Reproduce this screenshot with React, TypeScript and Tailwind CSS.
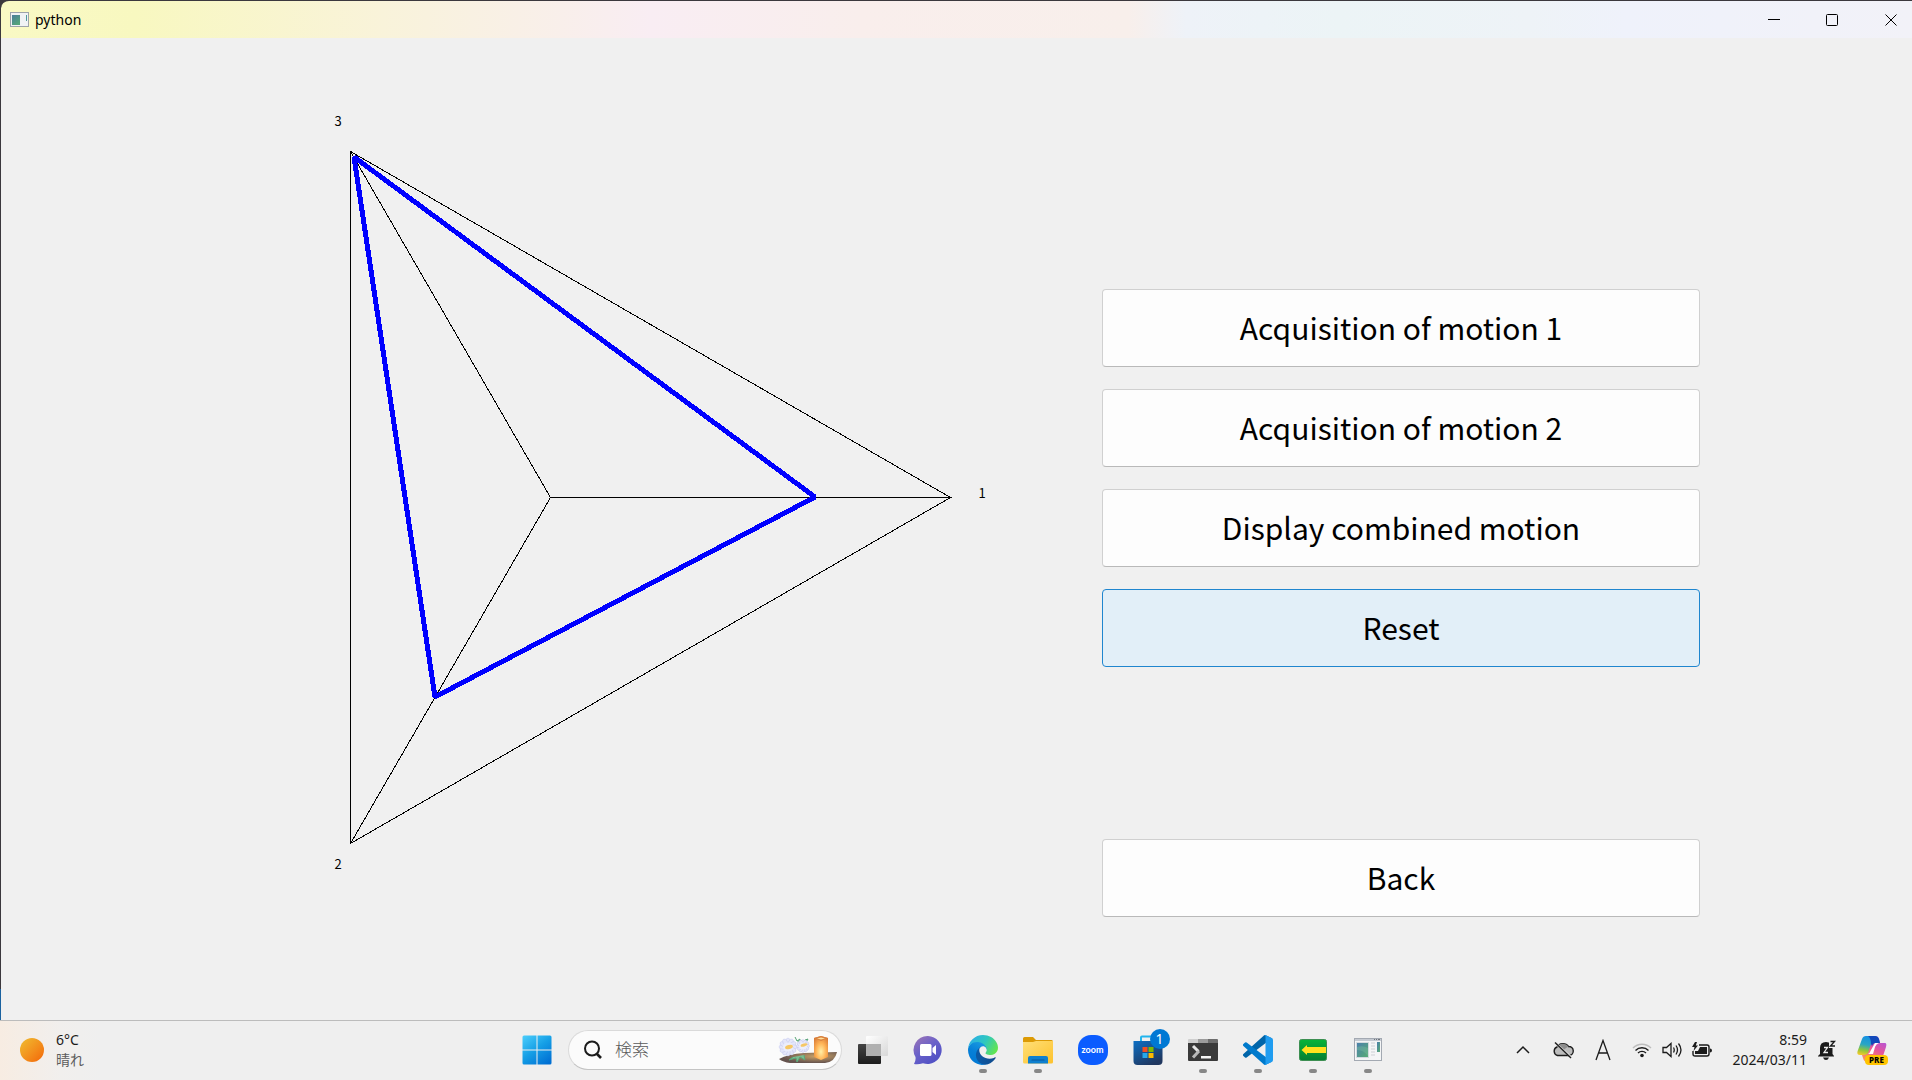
import { useState, type ReactNode } from "react";

const motions = ["Acquisition of motion 1", "Acquisition of motion 2", "Display combined motion", "Reset"];

const plainButton =
  "h-[78px] w-full rounded border border-[#d0d0d0] border-b-[#b9b9b9] bg-[#fdfdfd] pb-0.5 text-black";
const activeButton = "h-[78px] w-full rounded border border-[#1f86cf] bg-[#e2eff8] pb-0.5 text-black";

function PreviewIcon({ className }: { className: string }) {
  return (
    <svg viewBox="0 0 28 24" className={className} aria-hidden="true">
      <defs>
        <linearGradient id="pv" x1="0" y1="0" x2="1" y2="1">
          <stop offset="0" stopColor="#4b7fae" />
          <stop offset="1" stopColor="#58ad72" />
        </linearGradient>
      </defs>
      <rect x="0.5" y="0.5" width="27" height="22" fill="#f4f5f6" stroke="#a3a9b2" />
      <rect x="1" y="1" width="26" height="2" fill="#c5cad2" />
      <path d="M20 1h1v1h-1zM22 1h1v1h-1zM24 1h2v1h-2z" fill="#70757c" />
      <rect x="2.500" y="4.500" width="12" height="15" fill="url(#pv)" stroke="#d4dadf" />
      <path d="M3 12q7 0 11 6v-8q-5-3-11-1z" fill="#7fc4a0" opacity=".35" />
      <path d="M17 5h4M17 8h4M17 11h4M17 14h4M17 17h4" stroke="#cdd0d5" />
      <rect x="23" y="4" width="3" height="10" fill="url(#pv)" />
    </svg>
  );
}

function WindowIcon() {
  return (
    <svg viewBox="0 0 19 15" className="h-[15px] w-[19px]" aria-hidden="true">
      <defs>
        <linearGradient id="wi" x1="0" y1="0" x2=".6" y2="1">
          <stop offset="0" stopColor="#4a7c9c" />
          <stop offset="1" stopColor="#54a57a" />
        </linearGradient>
      </defs>
      <rect x=".5" y=".5" width="18" height="14" fill="#f0f2f5" stroke="#9da3ab" />
      <rect x="2" y="3" width="8" height="10" fill="url(#wi)" />
      <rect x="16" y="3" width="1" height="6" fill="#4f9a9c" />
    </svg>
  );
}

function RadarChart() {
  return (
    <svg viewBox="1 1 1101 900" className="block h-auto w-full" role="img" aria-label="Motion ratio chart">
      <g fill="none" stroke="#000" shapeRendering="crispEdges">
        <path d="M950.500 460.500L350.500 114.500V806.500Z" />
        <path d="M550.500 460.500H950.500M550.500 460.500L350.500 114.500M550.500 460.500L350.500 806.500" />
        <path d="M815 460L354 120L435 660Z" stroke="#00f" strokeWidth="5" strokeLinejoin="bevel" />
      </g>
      <g fontFamily="'Noto Sans CJK JP', sans-serif" fontSize="13" textAnchor="middle">
        <text x="982" y="461">1</text>
        <text x="338" y="832">2</text>
        <text x="338" y="89">3</text>
      </g>
    </svg>
  );
}

function StartIcon() {
  return (
    <svg viewBox="0 0 30 30" className="size-[30px]" aria-hidden="true">
      <defs>
        <linearGradient id="win" gradientUnits="userSpaceOnUse" x1="2" y1="0" x2="24" y2="30">
          <stop offset="0" stopColor="#4bcdfb" />
          <stop offset=".5" stopColor="#159fe6" />
          <stop offset="1" stopColor="#006fd3" />
        </linearGradient>
      </defs>
      <path fill="url(#win)" d="M2 0.500H14.500V14.500H.5V2Q.5.500 2 .5ZM15.500.5H28Q29.500.5 29.500 2V14.500H15.500ZM.5 15.500H14.500V29.500H2Q.5 29.500.5 28ZM15.500 15.500H29.500V28Q29.500 29.500 28 29.500H15.500Z" />
    </svg>
  );
}

function SearchArt() {
  const petals = [0, 30, 60, 90, 120, 150, 180, 210, 240, 270, 300, 330];
  return (
    <svg viewBox="0 0 60 30" className="h-[30px] w-[60px] shrink-0" aria-hidden="true">
      <defs>
        <radialGradient id="lamp" cx=".5" cy=".65" r=".7">
          <stop offset="0" stopColor="#fff0a8" />
          <stop offset=".5" stopColor="#ffb457" />
          <stop offset="1" stopColor="#d97a35" />
        </radialGradient>
        <radialGradient id="ground" cx=".65" cy=".4" r=".6">
          <stop offset="0" stopColor="#c9a268" />
          <stop offset="1" stopColor="#65534e" />
        </radialGradient>
      </defs>
      <path d="M1 24Q10 19 26 18L59 17Q57 27 47 28H12Q5 27 1 24Z" fill="url(#ground)" />
      <path d="M17 2l2 4 3-2-1 5M27 5l3-1-3 5M15 22l-4 3 7-2 1 4 3-5 5 3-1-5" fill="#7bbd91" stroke="#5ba679" />
      <ellipse cx="10" cy="12" rx="8" ry="7" fill="#d9dbf5" />
      <ellipse cx="25" cy="11" rx="6" ry="5" fill="#d9dbf5" />
      {petals.map((a) => (
        <g key={a} fill="#e4e6fa" stroke="#bdc1ea" strokeWidth=".4">
          <ellipse cx="10" cy="6.500" rx="2.200" ry="3.500" transform={`rotate(${a} 10 12)`} />
          <ellipse cx="25" cy="7" rx="1.800" ry="2.600" transform={`rotate(${a} 25 11)`} />
        </g>
      ))}
      <ellipse cx="10" cy="12" rx="5" ry="4.500" fill="#eceefc" />
      <ellipse cx="25" cy="11" rx="4" ry="3.500" fill="#eceefc" />
      <ellipse cx="11" cy="12" rx="4" ry="2" fill="#f5c766" transform="rotate(-15 11 12)" />
      <ellipse cx="26" cy="10" rx="3.500" ry="1.500" fill="#f5c766" transform="rotate(-15 26 10)" />
      <path d="M36 3L43 1 50 3V22L43 25 36 22Z" fill="url(#lamp)" />
      <path d="M36 3L43 1 50 3 43 6Z" fill="#d9823f" />
      <path d="M39 3.500l4-1 4 1-4 1z" fill="#ffdf9a" />
    </svg>
  );
}

function TaskViewIcon() {
  return (
    <svg viewBox="0 0 30 30" className="size-[30px]" aria-hidden="true">
      <defs>
        <linearGradient id="tvd" x1="0" y1="0" x2="0" y2="1">
          <stop offset="0" stopColor="#444" />
          <stop offset="1" stopColor="#1c1c1c" />
        </linearGradient>
        <linearGradient id="tvl" x1="0" y1="0" x2="1" y2="1">
          <stop offset="0" stopColor="#fff" />
          <stop offset="1" stopColor="#d8d8d8" />
        </linearGradient>
      </defs>
      <rect y="9" width="23" height="20" rx="1" fill="url(#tvd)" />
      <rect x="8" y="1" width="22" height="20" rx="1" fill="url(#tvl)" />
      <path d="M8 9H23V21H9Q8 21 8 20Z" fill="#b0b0b0" />
    </svg>
  );
}

function ChatIcon() {
  return (
    <svg viewBox="0 0 30 30" className="size-[30px]" aria-hidden="true">
      <defs>
        <linearGradient id="chat" x1="0" y1="0" x2=".7" y2="1">
          <stop offset="0" stopColor="#a076b4" />
          <stop offset=".5" stopColor="#6a61c9" />
          <stop offset="1" stopColor="#4f50c4" />
        </linearGradient>
      </defs>
      <path d="M15 1A14 14 0 1 1 10 28.200Q5 30 1 29Q3 26 2.500 22A14 14 0 0 1 15 1Z" fill="url(#chat)" />
      <rect x="7" y="9" width="11.500" height="12" rx="1.500" fill="#fff" />
      <path d="M19.500 13L23 10V20L19.500 17Z" fill="#fff" />
    </svg>
  );
}

function EdgeIcon() {
  return (
    <svg viewBox="0 0 256 256" className="size-[30px]" aria-hidden="true">
      <defs>
        <linearGradient id="e1" x1=".2" y1=".5" x2="1" y2=".5">
          <stop offset="0" stopColor="#0c59a4" />
          <stop offset="1" stopColor="#114a8b" />
        </linearGradient>
        <linearGradient id="e2" x1=".7" y1="0" x2=".3" y2="1">
          <stop offset="0" stopColor="#1b9de2" />
          <stop offset=".5" stopColor="#0680d8" />
          <stop offset="1" stopColor="#0078d4" />
        </linearGradient>
        <linearGradient id="e3" x1="0" y1=".3" x2="1" y2=".7">
          <stop offset="0" stopColor="#2baee8" />
          <stop offset=".5" stopColor="#2fc7bf" />
          <stop offset="1" stopColor="#64e64a" />
        </linearGradient>
      </defs>
      <path fill="url(#e1)" d="M231 190.500c-3.400 1.800-6.900 3.400-10.500 4.700a101.500 101.500 0 0 1-35.900 6.500c-47.300 0-88.500-32.500-88.500-74.300.1-11.400 6.400-21.900 16.400-27.300-42.800 1.800-53.800 46.400-53.800 72.500 0 73.900 68.100 81.400 82.800 81.400 7.900 0 19.800-2.300 27-4.600l1.300-.4a128.300 128.300 0 0 0 66.600-52.800 4 4 0 0 0-5.400-5.700z" />
      <path fill="url(#e2)" d="M105.700 241.400a79.200 79.200 0 0 1-22.700-21.300 80.700 80.700 0 0 1 29.500-120c3.200-1.500 8.500-4.100 15.600-4 10.100.1 19.600 4.900 25.700 13a31.900 31.900 0 0 1 6.300 18.700c0-.2 24.500-79.600-80-79.600-43.900 0-80 41.700-80 78.200a130.200 130.200 0 0 0 12.100 56 128 128 0 0 0 156.400 67 75.500 75.500 0 0 1-62.800-8z" />
      <path fill="url(#e3)" d="M152.300 148.900c-.9 1-3.400 2.500-3.400 5.600 0 2.600 1.700 5.200 4.800 7.300 14.300 10 41.400 8.600 41.500 8.600a59.600 59.600 0 0 0 30.300-8.300 61.400 61.400 0 0 0 30.400-52.900c.3-22.400-8-37.300-11.300-43.900C223.500 23.900 177.700 0 128 0A128 128 0 0 0 0 126.200c.5-36.500 36.800-66 80-66 3.500 0 23.500.3 42 10a72.600 72.600 0 0 1 30.900 29.300c6.100 10.600 7.200 24.100 7.200 29.500 0 5.400-2.700 13.300-7.800 19.900z" />
    </svg>
  );
}

function FolderIcon() {
  return (
    <svg viewBox="0 0 30 30" className="size-[30px]" aria-hidden="true">
      <defs>
        <linearGradient id="fold" x1="0" y1="0" x2="1" y2="1">
          <stop offset="0" stopColor="#ffdf78" />
          <stop offset="1" stopColor="#fdc22d" />
        </linearGradient>
      </defs>
      <path d="M0 3.500Q0 2 1.500 2H10L13 5H28.500Q30 5 30 6.500V10H0Z" fill="#dc9a05" />
      <path d="M0 7H10L13 6H30V27Q30 28.500 28.500 28.500H1.500Q0 28.500 0 27Z" fill="url(#fold)" />
      <path d="M5 28.500V23Q5 21 7 21H23Q25 21 25 23V28.500Z" fill="#0f80cf" />
      <path d="M9 25H21" stroke="#0a579b" strokeWidth="1.200" strokeLinecap="round" />
    </svg>
  );
}

function ZoomIcon() {
  return (
    <span className="flex size-[30px] items-center justify-center rounded-[13px] bg-[#0b5cff] font-['Lato','Noto_Sans',sans-serif] text-[9px] font-bold text-white">
      zoom
    </span>
  );
}

function StoreIcon() {
  return (
    <span className="relative">
      <svg viewBox="0 0 30 30" className="size-[30px]" aria-hidden="true">
        <defs>
          <linearGradient id="store" x1="0" y1="0" x2=".6" y2="1">
            <stop offset="0" stopColor="#0d6fc4" />
            <stop offset="1" stopColor="#20375f" />
          </linearGradient>
        </defs>
        <path d="M8 7V2.500Q8 1.500 9 1.500H21V7" fill="none" stroke="#22b5ee" strokeWidth="2" />
        <path d="M.5 6H29.500V26Q29.500 30 25.500 30H4.500Q.5 30 .5 26Z" fill="url(#store)" />
        <path d="M9.500 12H14.500V17H9.500Z" fill="#f25022" />
        <path d="M15.500 12H20.500V17H15.500Z" fill="#7fba00" />
        <path d="M9.500 18H14.500V23H9.500Z" fill="#28a8ea" />
        <path d="M15.500 18H20.500V23H15.500Z" fill="#ffb900" />
      </svg>
      <span className="absolute -top-[6px] -right-[7px] flex size-5 items-center justify-center rounded-full bg-[#0078d4] text-sm text-white">
        1
      </span>
    </span>
  );
}

function TerminalIcon() {
  return (
    <svg viewBox="0 0 30 30" className="size-[30px]" aria-hidden="true">
      <path d="M0 5Q0 4 1 4H10V9H0Z" fill="#cfcfcf" />
      <path d="M10 4H20V9H10Z" fill="#9b9b9b" />
      <path d="M20 4H29Q30 4 30 5V9H20Z" fill="#6d6d6d" />
      <path d="M0 8H30V25Q30 26 29 26H1Q0 26 0 25Z" fill="#3a3a3a" />
      <path d="M5 11L10.500 16.500" stroke="#e6e6e6" strokeWidth="3" />
      <path d="M11 16L5 22.500" stroke="#bababa" strokeWidth="3" />
      <path d="M13 21H23V23.500H13Z" fill="#f4f4f4" />
    </svg>
  );
}

function CodeIcon() {
  return (
    <svg viewBox="0 0 100 100" className="size-[30px]" aria-hidden="true">
      <path fill="#0065a9" d="M96.500 10.800L75.900.9a6.200 6.200 0 0 0-7.100 1.200L1.300 63.600a4.200 4.200 0 0 0 0 6.200l5.500 5a4.200 4.200 0 0 0 5.300.2L93.400 13.400c2.700-2.100 6.600-.1 6.600 3.300v-.3a6.300 6.300 0 0 0-3.500-5.600z" />
      <path fill="#007acc" d="M96.500 89.200l-20.600 9.900a6.200 6.200 0 0 1-7.100-1.200L1.300 36.400a4.200 4.200 0 0 1 0-6.200l5.500-5a4.200 4.200 0 0 1 5.300-.2l81.300 61.600c2.700 2.100 6.600.1 6.600-3.300v.3a6.300 6.300 0 0 1-3.500 5.600z" />
      <path fill="#1f9cf0" d="M75.900 99.100a6.200 6.200 0 0 1-7.100-1.200c2.300 2.300 6.200.7 6.200-2.600V4.700c0-3.300-3.900-4.900-6.200-2.600A6.200 6.200 0 0 1 75.900.9l20.600 9.900a6.300 6.300 0 0 1 3.500 5.600v67.200a6.300 6.300 0 0 1-3.500 5.600z" />
    </svg>
  );
}

function ArrowIcon() {
  return (
    <svg viewBox="0 0 30 30" className="size-[30px]" aria-hidden="true">
      <defs>
        <linearGradient id="grn" x1="0" y1="0" x2="0" y2="1">
          <stop offset="0" stopColor="#05b53a" />
          <stop offset="1" stopColor="#057d31" />
        </linearGradient>
      </defs>
      <rect x="1.500" y="4.500" width="27" height="21" rx="2" fill="url(#grn)" stroke="#3d8f52" />
      <path d="M3.500 15L9 10V12H28V18H9V20Z" fill="#ffe11f" />
    </svg>
  );
}

function CopilotIcon() {
  return (
    <span className="relative flex size-[30px]">
      <svg viewBox="0 0 30 30" className="size-[30px]" aria-hidden="true">
        <defs>
          <linearGradient id="cpa" x1=".5" y1="0" x2=".3" y2="1">
            <stop offset="0" stopColor="#1690e4" />
            <stop offset=".45" stopColor="#2aa6c4" />
            <stop offset=".75" stopColor="#8fc63d" />
            <stop offset="1" stopColor="#f2c928" />
          </linearGradient>
          <linearGradient id="cpb" x1=".8" y1="0" x2=".3" y2="1">
            <stop offset="0" stopColor="#a556ea" />
            <stop offset=".5" stopColor="#e5559d" />
            <stop offset="1" stopColor="#ff9459" />
          </linearGradient>
        </defs>
        <path d="M18 1Q21 1 22 4L23 8H28Q30 8 29 12L26 21Q24 27 20 27H10Q7 27 6 23L5 20Z" fill="url(#cpb)" />
        <path d="M9 1H19Q16 2 15 6L11 18Q10 20 7 20H3Q-1 20 1 15L5 4Q6 1 9 1Z" fill="url(#cpa)" />
        <path d="M11 1H18Q21 1 22 4L23 8H19Q16 8 15 11L14 9Q14 3 11 1Z" fill="#1249ba" />
        <path d="M18 8H22Q19 9 18 12L16 19H11Q13 18 14 15Z" fill="#fff" />
      </svg>
      <span className="absolute -right-px bottom-0 flex h-[10px] w-[23px] items-center justify-center rounded-sm bg-[#ffc400] text-[8px] font-extrabold text-black">
        PRE
      </span>
    </span>
  );
}

function AppButton({ label, running, children }: { label: string; running?: boolean; children: ReactNode }) {
  return (
    <button type="button" aria-label={label} className="relative flex h-full w-[55px] items-center justify-center">
      {children}
      {running && <span className="absolute bottom-[6px] left-6 h-1 w-2 rounded-full bg-[#878787]" />}
    </button>
  );
}

function TitleBar() {
  return (
    <header className="flex h-[38px] items-center justify-between rounded-tl-lg border-t border-[#3b383d] bg-[linear-gradient(90deg,#f9f9c4_0%,#f8f8c0_7%,#f9f3da_20%,#f9edf3_34%,#f9eeec_45%,#f8efeb_59%,#eef2f8_62%,#ecf4f6_70%,#eef3f7_80%,#eff2fb_85%,#f2f2f8_100%)] pl-[9px]">
      <div className="flex items-center gap-[6px]">
        <WindowIcon />
        <h1 className="text-sm text-black">python</h1>
      </div>
      <div className="flex h-full">
        <button type="button" aria-label="Minimize" className="flex w-[58px] items-center justify-center">
          <svg viewBox="0 0 12 12" className="size-3"><path d="M0 5.500H12" stroke="#000" /></svg>
        </button>
        <button type="button" aria-label="Maximize" className="flex w-[58px] items-center justify-center">
          <svg viewBox="0 0 12 12" className="size-3"><rect x=".5" y=".5" width="11" height="11" rx="1" fill="none" stroke="#000" /></svg>
        </button>
        <button type="button" aria-label="Close" className="flex w-[51px] items-center justify-center pl-2">
          <svg viewBox="0 0 12 12" className="size-3"><path d="M.5.5L11.500 11.500M11.500.5L.5 11.500" stroke="#000" /></svg>
        </button>
      </div>
    </header>
  );
}

function Tray() {
  return (
    <div className="flex items-center justify-end pr-[25px] pb-0.5 text-[#1b1b1b]">
      <button type="button" aria-label="Show hidden icons" className="mr-[22px]">
        <svg viewBox="0 0 14 10" className="h-[10px] w-[14px]"><path d="M1 8L7 2L13 8" fill="none" stroke="currentColor" strokeWidth="1.500" /></svg>
      </button>
      <button type="button" aria-label="OneDrive" className="mr-[21px]">
        <svg viewBox="0 0 22 18" className="h-[18px] w-[22px]">
          <path d="M5.500 14.500A4.500 4.500 0 0 1 5 6A6.500 5.500 0 0 1 16.500 5.500A4.500 4.500 0 0 1 17 14.500Z" fill="#bcbcbc" stroke="currentColor" strokeWidth="1.400" />
          <path d="M5 6A6.500 5.500 0 0 1 16.500 5.500Q13 7 11 10Q9 6 5 6Z" fill="#8d8d8d" />
          <path d="M3.500 2L19 16" stroke="#e4e4e4" strokeWidth="2" />
          <path d="M3 1.500L19 17" stroke="currentColor" strokeWidth="1.400" />
        </svg>
      </button>
      <button type="button" aria-label="Input mode" className="mr-[21px]">
        <svg viewBox="0 0 16 22" className="h-[22px] w-4"><path d="M1 21L8 1.500L15 21M3.500 14H12.500" fill="none" stroke="currentColor" strokeWidth="1.300" /></svg>
      </button>
      <button type="button" aria-label="Network, sound and battery" className="mr-[21px] flex items-center gap-[10px]">
        <svg viewBox="0 0 20 16" className="h-4 w-5" fill="none" strokeWidth="1.400">
          <path d="M1 6A12.700 12.700 0 0 1 19 6" stroke="#bdbdbd" />
          <path d="M3.500 8.500A9.200 9.200 0 0 1 16.500 8.500M6 11A5.700 5.700 0 0 1 14 11" stroke="currentColor" />
          <circle cx="10" cy="13.500" r="1.800" fill="currentColor" />
        </svg>
        <svg viewBox="0 0 20 16" className="h-4 w-5" fill="none" stroke="currentColor" strokeWidth="1.300">
          <path d="M1 5.500H4.500L9 1.500V14.500L4.500 10.500H1ZM11.500 5.500Q13 8 11.500 10.500M14 3.500Q17 8 14 12.500M16.500 1.500Q21.500 8 16.500 14.500" />
        </svg>
        <svg viewBox="0 0 20 16" className="h-4 w-5">
          <path d="M7 3H15Q17 3 17 5V12Q17 14 15 14H3Q1 14 1 12V9" fill="none" stroke="currentColor" strokeWidth="1.400" />
          <path d="M8 5H15V12H3V9H6Z" fill="currentColor" />
          <path d="M18 6.500Q20 6.500 20 8.500Q20 10.500 18 10.500Z" fill="currentColor" />
          <path d="M3 0L0 5H2.500L1.500 9L6 3.500H3.800L5 0Z" fill="currentColor" />
        </svg>
      </button>
      <button type="button" className="mr-[11px] text-right text-sm leading-5">
        <time dateTime="2024-03-11T08:59">
          8:59
          <br />
          2024/03/11
        </time>
      </button>
      <button type="button" aria-label="Notifications" className="mr-[21px]">
        <svg viewBox="0 0 18 20" className="h-5 w-[18px]">
          <path d="M2 14V8Q2 2 8 2Q14 2 14.500 8V14L16 16V16.500H0V16Z" fill="currentColor" />
          <path d="M5 17.500H11Q10 20 8 20Q6 20 5 17.500Z" fill="currentColor" />
          <path d="M11 0H18V8H11Z" fill="#efefef" />
          <path d="M12.500 1.500H16.500L12.500 6H17" fill="none" stroke="currentColor" strokeWidth="1.400" />
          <path d="M6 7.500H9.500L6 12.500H10" fill="none" stroke="#efefef" strokeWidth="1.300" />
        </svg>
      </button>
      <button type="button" aria-label="Copilot">
        <CopilotIcon />
      </button>
    </div>
  );
}

function Taskbar() {
  return (
    <footer className="grid h-[60px] grid-cols-[1fr_auto_1fr] border-t border-[#bcbcbc] bg-[linear-gradient(90deg,#f7ece2_0,#f1efed_60px,#efefef_100px)]">
      <div className="flex items-center gap-3 pb-0.5 pl-5">
        <span className="size-6 rounded-full bg-linear-to-br from-[#eebd30] to-[#f26405]" />
        <p className="text-sm leading-5 text-[#1b1b1b]">
          6°C
          <br />
          <span className="text-[#5c5c5c]">晴れ</span>
        </p>
      </div>
      <nav aria-label="Taskbar" className="flex items-center pr-2 pb-px">
        <AppButton label="Start"><StartIcon /></AppButton>
        <label className="mr-[3px] ml-1 flex h-10 w-[274px] items-center rounded-full border border-[#dadada] border-b-[#c4c4c4] bg-[#fbfbfb] pr-[3px] pl-[14px]">
          <svg viewBox="0 0 20 20" className="size-5 shrink-0" fill="none" stroke="#1b1b1b" aria-hidden="true">
            <circle cx="9" cy="8.500" r="7" strokeWidth="2" />
            <path d="M13.500 13.500L18 18" strokeWidth="2.600" />
          </svg>
          <input
            type="search"
            aria-label="検索"
            placeholder="検索"
            className="ml-3 w-0 flex-1 bg-transparent text-[17px] font-light outline-none placeholder:text-[#5a5a5a]"
          />
          <SearchArt />
        </label>
        <AppButton label="Task view"><TaskViewIcon /></AppButton>
        <AppButton label="Chat"><ChatIcon /></AppButton>
        <AppButton label="Edge" running><EdgeIcon /></AppButton>
        <AppButton label="Explorer" running><FolderIcon /></AppButton>
        <AppButton label="Zoom"><ZoomIcon /></AppButton>
        <AppButton label="Store"><StoreIcon /></AppButton>
        <AppButton label="Terminal" running><TerminalIcon /></AppButton>
        <AppButton label="Code" running><CodeIcon /></AppButton>
        <AppButton label="Remote" running><ArrowIcon /></AppButton>
        <AppButton label="python" running><PreviewIcon className="h-6 w-7" /></AppButton>
      </nav>
      <Tray />
    </footer>
  );
}

export default function App() {
  const [active, setActive] = useState("Reset");
  return (
    <div className="flex min-h-screen flex-col bg-[#f0f0f0] font-['Noto_Sans','Noto_Sans_CJK_JP',sans-serif]">
      <div className="flex flex-1 flex-col bg-[linear-gradient(180deg,#3b383d_97%,#1a62a0_97%)] pl-px">
        <TitleBar />
        <main className="grid flex-1 grid-cols-[1101fr_598fr_212fr] items-start bg-[#f0f0f0]">
          <RadarChart />
          <div className="flex flex-col gap-[22px] pt-[251px] font-['Noto_Sans_CJK_JP',sans-serif] text-[30px]">
            {motions.map((name) => (
              <button
                key={name}
                type="button"
                onClick={() => setActive(name)}
                className={active === name ? activeButton : plainButton}
              >
                {name}
              </button>
            ))}
            <button type="button" className={`mt-[150px] ${plainButton}`}>
              Back
            </button>
          </div>
        </main>
      </div>
      <Taskbar />
    </div>
  );
}
